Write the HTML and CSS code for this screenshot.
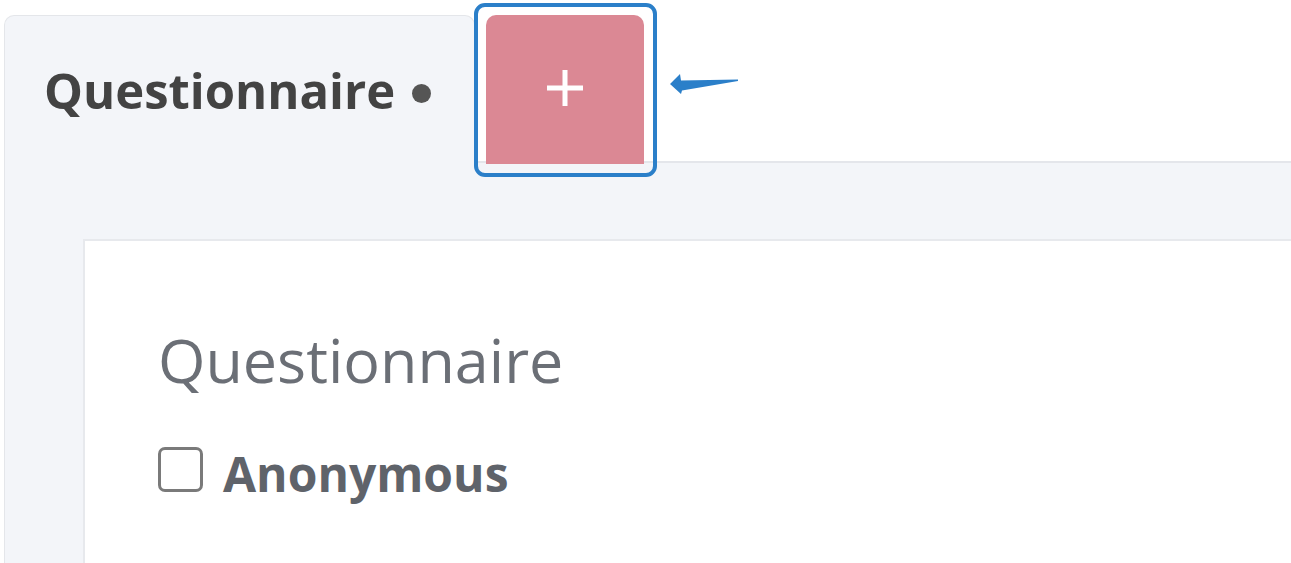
FILE: index.html
```html
<!DOCTYPE html>
<html lang="en">
<head>
  <meta charset="UTF-8">
  <title>Questionnaire</title>
  <link rel="stylesheet" href="styles.css">
</head>
<body>
  <div class="tabs">
    <div class="tab tab-active">
      <span class="tab-title">Questionnaire</span>
      <span class="tab-dot"></span>
    </div>
    <button type="button" class="tab-add" aria-label="Add">
      <svg class="plus" width="40" height="40" viewBox="0 0 40 40">
        <path d="M20 2 V38 M2 20 H38" stroke="#fff" stroke-width="5" fill="none"/>
      </svg>
      <!-- annotation -->
      <span class="highlight"></span>
      <svg class="arrow" width="72" height="24" viewBox="0 0 72 24">
        <polygon points="2,12 12,2 13,8.5 70,7.5 70,9 14,18.5 13,22" fill="#2b7fc9"/>
      </svg>
    </button>
  </div>

  <div class="tab-content">
    <div class="card">
      <h2>Questionnaire</h2>
      <label class="check">
        <span class="box"></span>
        Anonymous
      </label>
    </div>
  </div>
</body>
</html>
```

FILE: styles.css
```css
body {
  margin: 0;
  background: #fff;
  font-family: "Open Sans", "Liberation Sans", sans-serif;
  overflow: hidden;
}
.tabs {
  display: flex;
  align-items: flex-end;
  padding: 15px 0 0 4px;
  position: relative;
  z-index: 1;
}
.tab {
  display: flex;
  align-items: center;
  box-sizing: border-box;
  width: 471px;
  height: 148px;
  padding: 0 0 0 39px;
  background: #f3f5f9;
  border: 1px solid #e4e6ea;
  border-bottom: none;
  border-radius: 10px 10px 0 0;
}
.tab-title {
  font-size: 49px;
  font-weight: bold;
  line-height: 56px;
  color: #434343;
}
.tab-dot {
  width: 19px;
  height: 19px;
  margin: 8px 0 0 17px;
  border-radius: 50%;
  background: #555;
}
.tab-add {
  position: relative;
  width: 158px;
  height: 149px;
  margin: 0 0 -1px 11px;
  padding: 0;
  border: none;
  border-radius: 10px 10px 0 0;
  background: #db8894;
  display: flex;
  align-items: center;
  justify-content: center;
  cursor: pointer;
}
.plus {
  margin-top: -3px;
}
.highlight {
  position: absolute;
  top: -12px;
  left: -12px;
  right: -13px;
  bottom: -13px;
  border: 4px solid #2b7fc9;
  border-radius: 11px;
}
.arrow {
  position: absolute;
  left: 182px;
  top: 57px;
}
.tab-content {
  box-sizing: border-box;
  height: 402px;
  margin: -2px 0 0 4px;
  padding: 76px 0 0 78px;
  background: #f3f5f9;
  border-top: 2px solid #e4e6eb;
  border-left: 1px solid #e4e6ea;
}
.card {
  box-sizing: border-box;
  height: 324px;
  background: #fff;
  border-top: 2px solid #e7e9ed;
  border-left: 2px solid #e7e9ed;
  padding: 83px 0 0 73px;
}
h2 {
  margin: 0;
  font-size: 61px;
  font-weight: normal;
  line-height: 72px;
  color: #6b6f76;
}
.check {
  display: flex;
  align-items: baseline;
  gap: 20px;
  margin-top: 50px;
  font-size: 48px;
  font-weight: bold;
  line-height: 56px;
  color: #5f636a;
}
.box {
  box-sizing: border-box;
  width: 45px;
  height: 45px;
  border: 3px solid #7a7a7a;
  border-radius: 7px;
  background: #fff;
}
```
